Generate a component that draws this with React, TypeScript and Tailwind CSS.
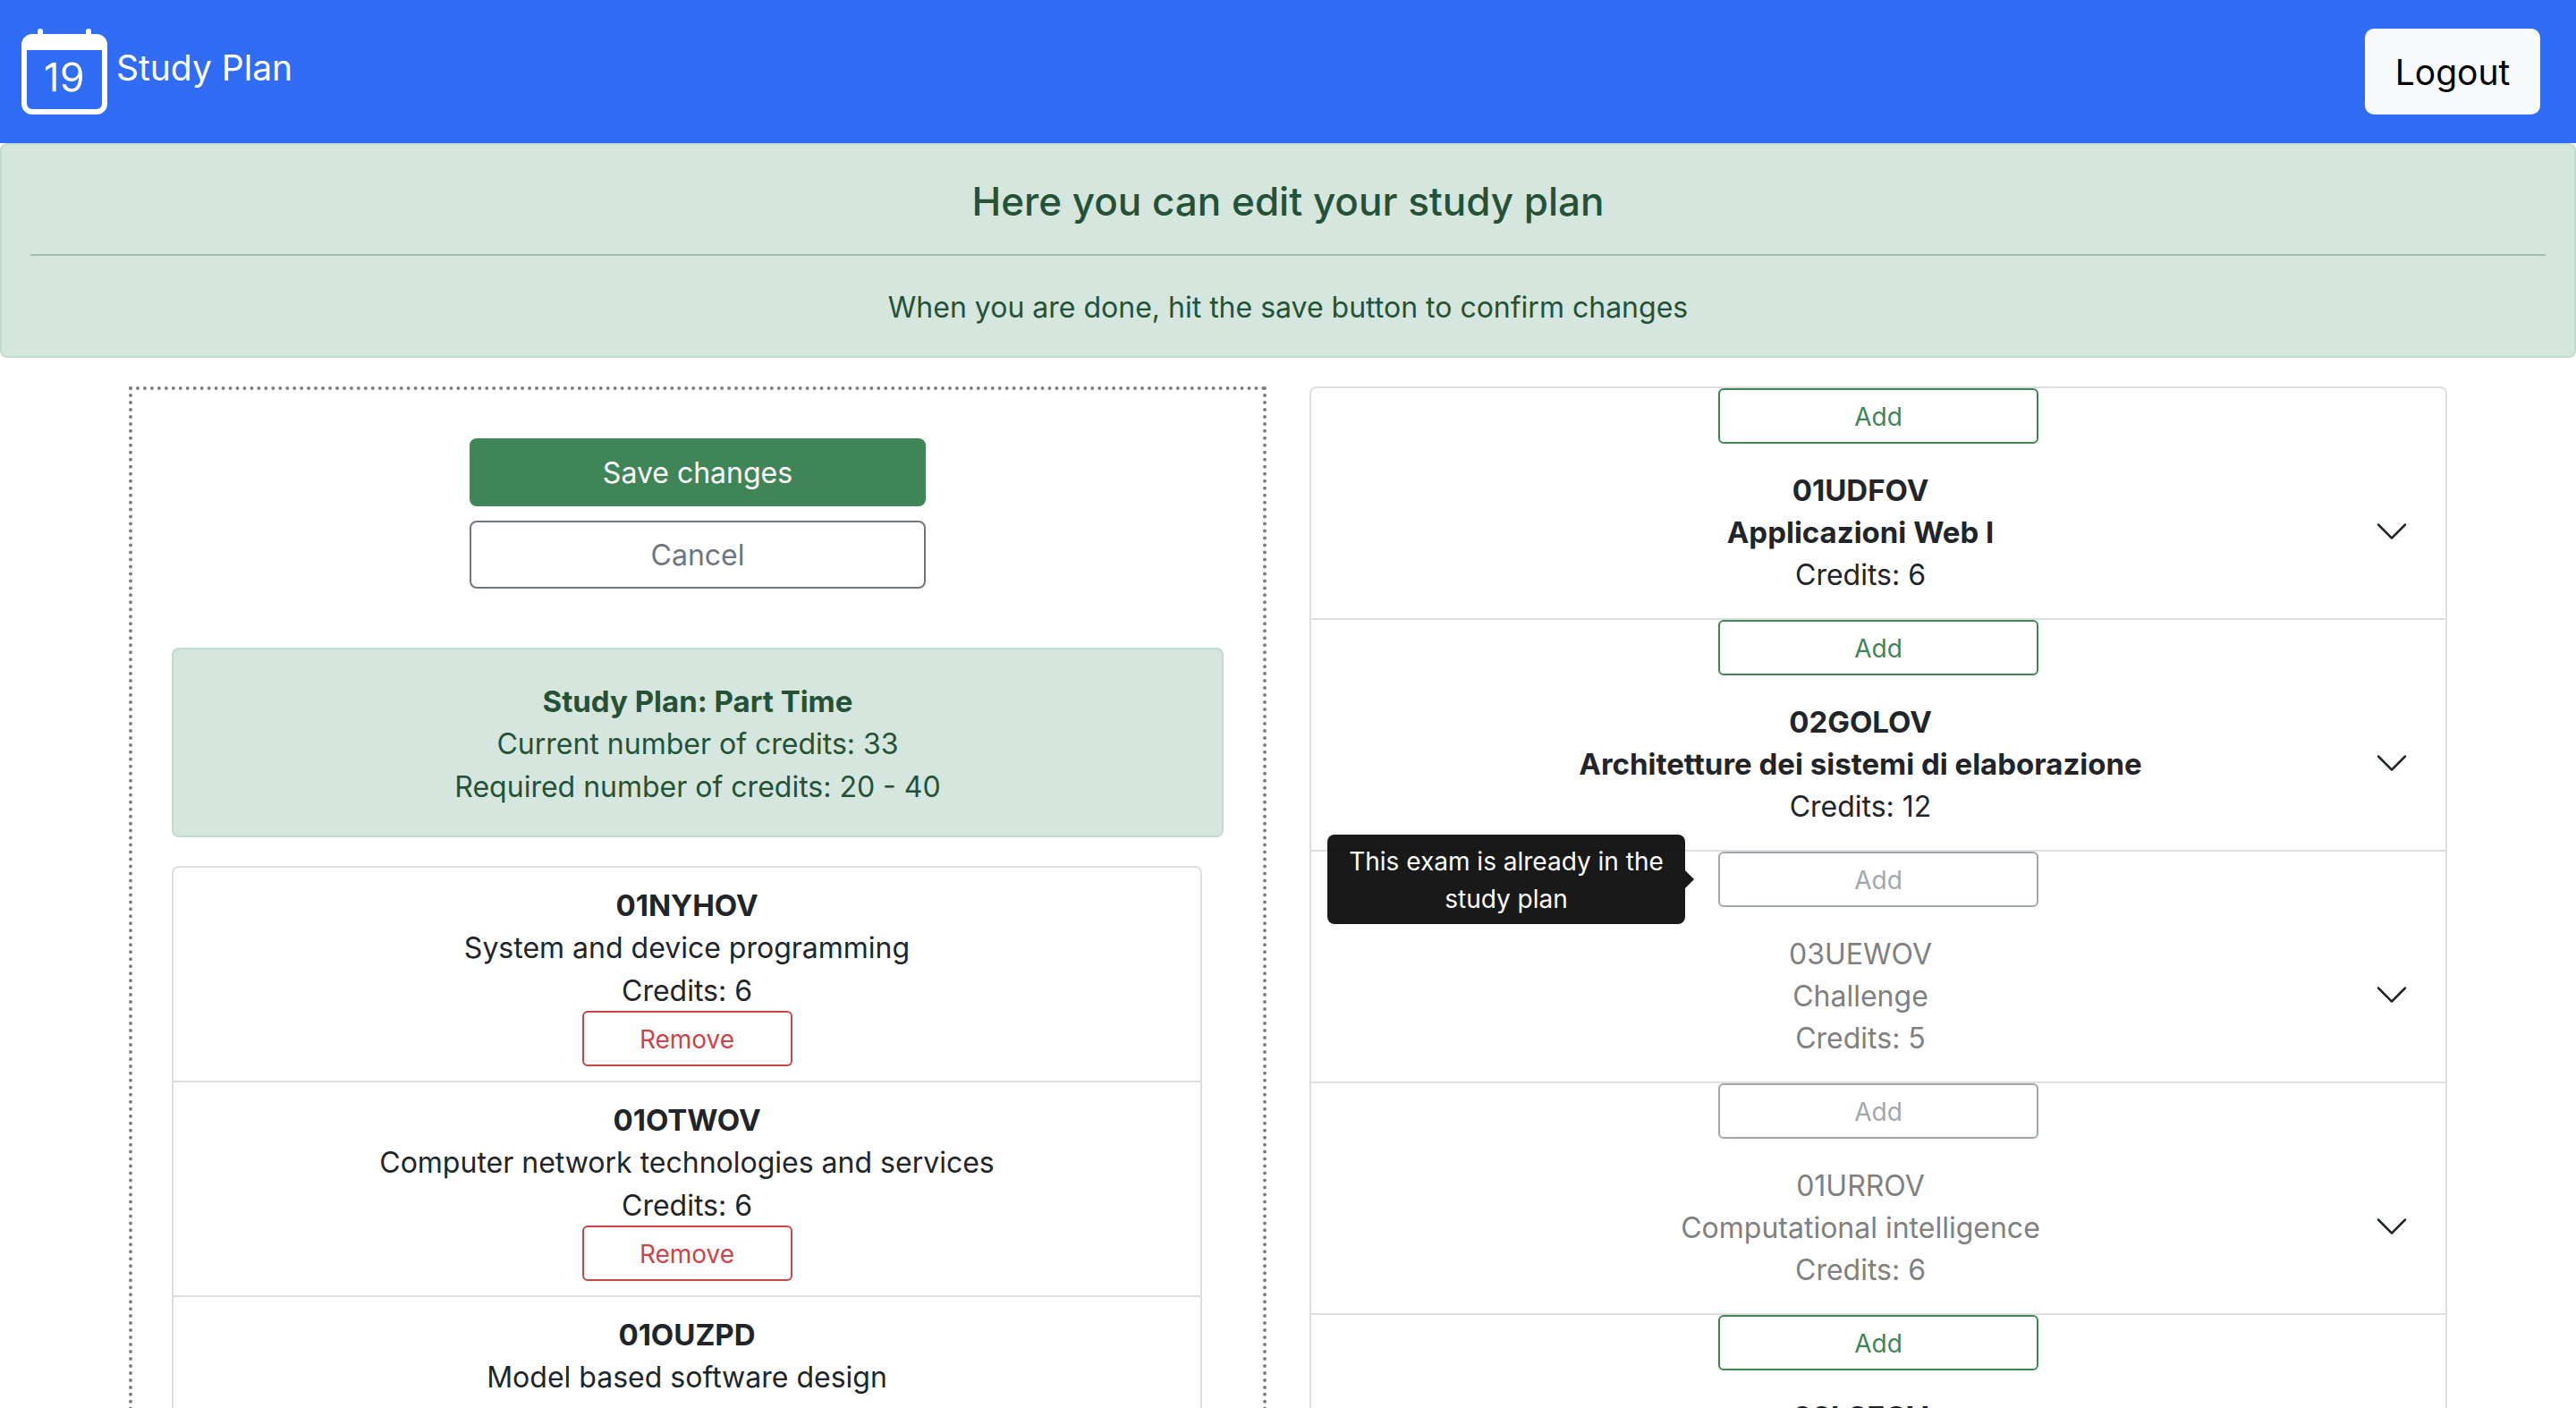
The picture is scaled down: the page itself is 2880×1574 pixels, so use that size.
import { BsCalendarDate, BsChevronDown } from "react-icons/bs";

type Exam = { code: string; name: string; credits: number };
type CatalogExam = Exam & { taken?: boolean; tooltip?: string };

const planned: Exam[] = [
  { code: "01NYHOV", name: "System and device programming", credits: 6 },
  { code: "01OTWOV", name: "Computer network technologies and services", credits: 6 },
  { code: "01OUZPD", name: "Model based software design", credits: 4 },
];

const catalog: CatalogExam[] = [
  { code: "01UDFOV", name: "Applicazioni Web I", credits: 6 },
  { code: "02GOLOV", name: "Architetture dei sistemi di elaborazione", credits: 12 },
  { code: "03UEWOV", name: "Challenge", credits: 5, taken: true, tooltip: "This exam is already in the study plan" },
  { code: "01URROV", name: "Computational intelligence", credits: 6, taken: true },
  { code: "02LSEOV", name: "Computer architectures", credits: 10 },
];

function Navbar() {
  return (
    <header className="flex items-center justify-between bg-[#316cf4] py-8 pr-10 pl-6 text-white">
      <a href="#" className="flex items-center gap-2.5 text-[39px] leading-[60px]">
        <BsCalendarDate className="size-24" aria-hidden="true" />
        <span className="pb-2">Study Plan</span>
      </a>
      <button type="button" className="h-24 w-[196px] rounded-[10px] bg-[#f8f9fa] pt-0.5 text-[39px] leading-[60px] text-black">
        Logout
      </button>
    </header>
  );
}

function PlannedExam({ exam }: { exam: Exam }) {
  return (
    <li className="border-t-2 border-[#dfdfdf] pt-[18px] pb-4 text-center first:border-t-0">
      <div className="flex h-[142px] flex-col">
        <strong className="text-[33px] font-bold">{exam.code}</strong>
        <span>{exam.name}</span>
        <span>Credits: {exam.credits}</span>
      </div>
      <button
        type="button"
        className="mx-auto block h-[62px] w-[235px] rounded-md border-2 border-[#cb444a] pt-0.5 text-[28px] leading-[42px] text-[#cb444a]"
      >
        Remove
      </button>
    </li>
  );
}

function CatalogRow({ exam }: { exam: CatalogExam }) {
  const titleClass = exam.taken ? "font-normal" : "text-[33px] font-bold";
  return (
    <li className="border-t-2 border-[#dfdfdf] first:border-t-0">
      <div className="relative mx-auto w-[358px]">
        <button
          type="button"
          disabled={exam.taken}
          className="block h-[62px] w-full rounded-md border-2 border-[#408558] pt-0.5 text-[28px] leading-[42px] text-[#408558] disabled:border-[#a2a7ac] disabled:text-[#a2a7ac]"
        >
          Add
        </button>
        {exam.tooltip && (
          <div
            role="tooltip"
            className="absolute top-1/2 right-full mr-[37px] flex w-[400px] -translate-y-1/2 items-center rounded-lg bg-black/90 px-4 pt-[9px] pb-[7px] text-center text-[28px] leading-[42px] text-white"
          >
            {exam.tooltip}
            <span className="absolute top-1/2 left-full -translate-y-1/2 border-y-[10px] border-l-[10px] border-y-transparent border-l-black/90" />
          </div>
        )}
      </div>
      <button
        type="button"
        className={`flex w-full items-center px-10 leading-[47px] ${exam.taken ? "text-[#808080]" : "text-[#212529]"}`}
      >
        <span className="flex flex-1 flex-col items-center pt-[29px] pb-[25px]">
          <span className={titleClass}>{exam.code}</span>
          <span className={titleClass}>{exam.name}</span>
          <span>Credits: {exam.credits}</span>
        </span>
        <BsChevronDown className="size-10 text-[#212529]" aria-hidden="true" />
      </button>
    </li>
  );
}

export default function App() {
  return (
    <div className="h-screen overflow-hidden bg-white font-['Inter',sans-serif] text-[32px] leading-[48px] text-[#212529]">
      <Navbar />
      <section className="rounded-lg border-2 border-[#c1dbce] bg-[#d5e6de] px-8 pt-[34px] pb-[30px] text-center text-[#255236]">
        <h1 className="text-[44px] leading-[58px] font-medium">Here you can edit your study plan</h1>
        <hr className="mt-[30px] mb-[34px] border-t-2 border-[#a4bdb1]" />
        <p>When you are done, hit the save button to confirm changes</p>
      </section>
      <main className="mx-auto mt-8 grid max-w-[2640px] grid-cols-2 items-start gap-12 px-6">
        <section className="border-4 border-dotted border-[#808080] px-11 pt-[54px] pb-11">
          <div className="flex flex-col items-center gap-4">
            <button type="button" className="h-[76px] w-[510px] rounded-lg bg-[#408558] pt-0.5 text-white">
              Save changes
            </button>
            <button type="button" className="h-[76px] w-[510px] rounded-lg border-2 border-[#6e757c] pt-0.5 text-[#6e757c]">
              Cancel
            </button>
          </div>
          <div className="mt-[66px] rounded-lg border-2 border-[#c1dbce] bg-[#d5e6de] px-8 pt-[34px] pb-[30px] text-center text-[#255236]">
            <p className="text-[33px] font-bold">Study Plan: Part Time</p>
            <p>Current number of credits: 33</p>
            <p>Required number of credits: 20 - 40</p>
          </div>
          <ul className="mt-8 mr-6 rounded-lg border-2 border-[#dfdfdf]">
            {planned.map((exam) => (
              <PlannedExam key={exam.code} exam={exam} />
            ))}
          </ul>
        </section>
        <ul className="rounded-lg border-2 border-[#dfdfdf]">
          {catalog.map((exam) => (
            <CatalogRow key={exam.code} exam={exam} />
          ))}
        </ul>
      </main>
    </div>
  );
}
